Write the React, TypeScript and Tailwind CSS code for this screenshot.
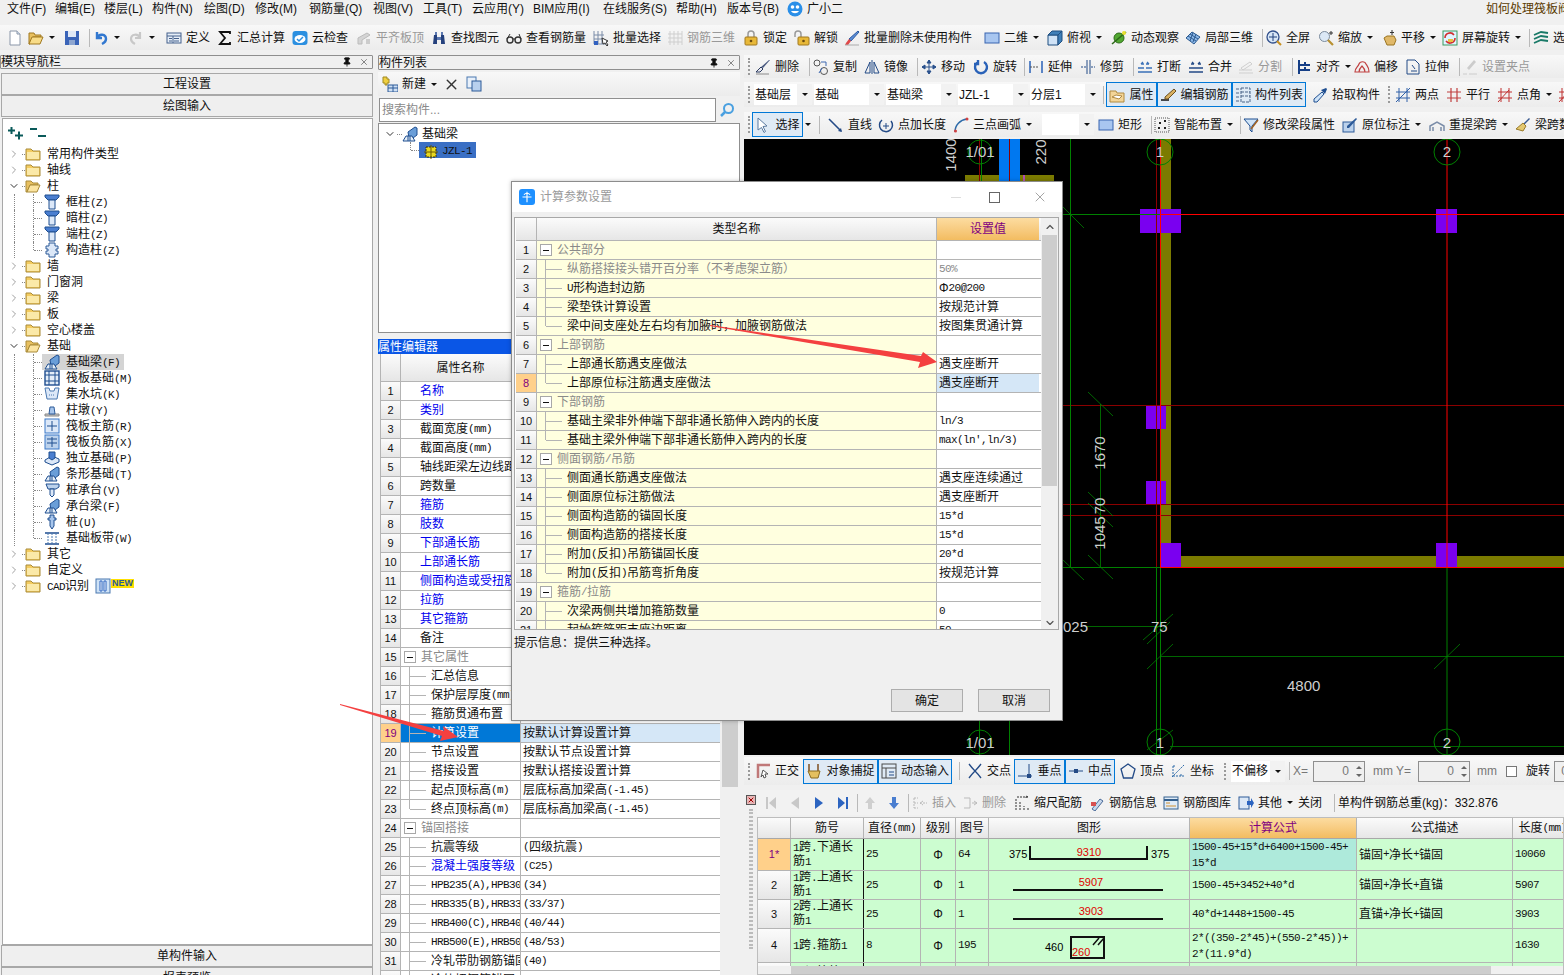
import { ReactNode } from "react";
import { ChevronDown, ChevronRight, ChevronUp, Pin, X } from "lucide-react";

// Small toolbar drawings, all in a 16x16 box
const ICONS: Record<string, ReactNode> = {
  doc: <><path d="M3 1h7l3 3v11H3z" fill="#fff" stroke="#8a96a8" /><path d="M10 1v3h3" fill="#d8e4f4" stroke="#8a96a8" /></>,
  open: <><path d="M1 3h5l1 2h6v2H5L2 14H1z" fill="#e8c060" stroke="#a07820" /><path d="M4 7h11l-3 7H1z" fill="#f8dc88" stroke="#a07820" /></>,
  save: <><path d="M1 1h14v14H1z" fill="#3a64b8" /><path d="M4 1h8v6H4z" fill="#dfe8f6" /><path d="M5 10h6v5H5z" fill="#8ea6d0" /></>,
  undo: <path d="M4 2v6h5M4 8c2-5 9-4 9 1 0 3-2 4-4 5" fill="none" stroke="#3278d0" strokeWidth="2.4" />,
  redo: <path d="M12 2v6H7M12 8C10 3 3 4 3 9c0 3 2 4 4 5" fill="none" stroke="#c8c8c8" strokeWidth="2.2" />,
  define: <><rect x="1" y="3" width="14" height="10" fill="#e6eef8" stroke="#44608c" /><path d="M1 6h14M3 8.5h3M3 11h3M8 8.5h5M8 11h5M7 6v7" stroke="#44608c" fill="none" /></>,
  sigma: <path d="M13 4V2H3l5 6-5 6h10v-2" fill="none" stroke="#111" strokeWidth="1.8" />,
  cloud: <><rect x="0.5" y="1" width="15" height="14" rx="3" fill="#2b8fe0" /><ellipse cx="8" cy="9" rx="5.5" ry="4" fill="#fff" /><path d="M5 9l2 2 4-4" fill="none" stroke="#2b8fe0" strokeWidth="1.5" /></>,
  flat: <><path d="M2 14V8l9-5 3 2-8 5v4z" fill="#d4d4d4" stroke="#bbb" /><path d="M10 14h4V9h-4z" fill="#ccc" /></>,
  bino: <><path d="M2 14l1-9h3v9zM10 14V5h3l1 9z" fill="#24407c" /><path d="M6 7h4v3H6zM4 2h2v3H4zM10 2h2v3h-2z" fill="#5c78b0" /></>,
  glasses: <><circle cx="4" cy="10" r="3" fill="none" stroke="#333" strokeWidth="1.4" /><circle cx="12" cy="10" r="3" fill="none" stroke="#333" strokeWidth="1.4" /><path d="M7 9h2M1 9l3-5M15 9l-2-5" stroke="#333" fill="none" /></>,
  batch: <><path d="M1 1v13h12M1 5h10M1 9h10M5 1v13M9 1v13" stroke="#7a8ca8" fill="none" /><path d="M9 8l6 3-2 1 2 3-1 1-2-3-2 1z" fill="#fff" stroke="#333" /><rect x="1" y="11" width="4" height="4" fill="#3060c0" /></>,
  r3d: <path d="M3 1v14M7 1v14M11 1v14M15 1v14M1 4h14M1 8h14M1 12h14" stroke="#cfcfcf" fill="none" />,
  lock: <><path d="M5 8V4a3 3 0 0 1 6 0v4" fill="none" stroke="#9a9a9a" strokeWidth="1.5" /><rect x="2" y="7" width="12" height="8" rx="1" fill="#e8b838" stroke="#a07820" /><circle cx="8" cy="11" r="1.3" fill="#6a4a10" /></>,
  unlock: <><path d="M1 7V4a3 3 0 0 1 6 0v3" fill="none" stroke="#9a9a9a" strokeWidth="1.5" /><rect x="4" y="7" width="11" height="8" rx="1" fill="#e8b838" stroke="#a07820" /><circle cx="9.5" cy="11" r="1.3" fill="#6a4a10" /></>,
  brush: <><path d="M14 1l1 1-8 9-2-2z" fill="#5b8ed8" stroke="#2c5aa0" /><path d="M5 9l2 2-3 4-3 0 1-2z" fill="#e04848" /><path d="M1 15h14" stroke="#aaa" /></>,
  rect: <rect x="1" y="3" width="14" height="10" fill="#a8c6f0" stroke="#3864b0" />,
  cube: <><path d="M1 5h10v10H1z" fill="#cfe2f6" stroke="#1f4e80" /><path d="M1 5l4-4h10l-4 4zM11 5l4-4v10l-4 4z" fill="#3f7fb8" stroke="#1f4e80" /></>,
  orbit: <><circle cx="8" cy="8" r="5" fill="#52a832" stroke="#2c6a18" /><path d="M1 14L15 2" stroke="#2c6a18" strokeWidth="1.6" /><circle cx="13" cy="3" r="2" fill="#e8e030" /></>,
  local3d: <path d="M1 8l6-6 8 5-6 7zM5 4l8 5M3 6l8 5M8 2.500L5 11M11 4l-3 8" fill="#8cb8e8" stroke="#2c5a90" />,
  full: <><circle cx="7" cy="7" r="6" fill="#d8e6f6" stroke="#32508c" strokeWidth="1.3" /><path d="M7 3v8M3 7h8" stroke="#20407c" /><path d="M11 11l4 4" stroke="#c89020" strokeWidth="2" /></>,
  zoom: <><circle cx="6.500" cy="6.500" r="5" fill="#dbe8f6" stroke="#7a8a9c" /><path d="M10 10l5 5" stroke="#b89030" strokeWidth="2.2" /><path d="M13 1v4M11 3h4" stroke="#333" /></>,
  hand: <><path d="M3 8l3-2 7 0 2 4-2 5H6z" fill="#e0b868" stroke="#9a7420" /><path d="M11 0v5M9 2.500h4" stroke="#333" /></>,
  spin: <><rect x="1" y="1" width="14" height="14" fill="#dff4ff" stroke="#3a9a60" /><path d="M3 8a5 5 0 0 1 9-3M13 8a5 5 0 0 1-9 3" fill="none" stroke="#d03030" strokeWidth="1.6" /><path d="M6 9h5v3H6z" fill="#e8c040" /></>,
  layers: <path d="M1 5l7-3 7 1M1 9l7-3 7 1M1 13l7-3 7 1" fill="none" stroke="#1a7a68" strokeWidth="1.8" />,
  erase: <><path d="M15 1L8 9l-2-1 8-7z" fill="#4a5a80" /><path d="M6 8l2 2-3 3H1z" fill="#e8e8f0" stroke="#2c3c60" /><path d="M1 15h13" stroke="#8a8a8a" /></>,
  copyc: <><circle cx="4" cy="4" r="3" fill="none" stroke="#555" /><circle cx="11" cy="12" r="3.500" fill="none" stroke="#555" /><path d="M8 3l5 0v4M6 14l3-5" stroke="#3a66b0" fill="none" /></>,
  mirror: <path d="M8 1v14M6 3L1 14h5zM10 3l5 11h-5z" fill="none" stroke="#234a86" />,
  move: <path d="M8 1v14M1 8h14M8 1L6 4h4zM8 15l-2-3h4zM1 8l3-2v4zM15 8l-3-2v4z" fill="#28508c" stroke="#28508c" />,
  rot: <path d="M5 3a6 6 0 1 0 6 0M5 1v4H1" fill="none" stroke="#2a62b8" strokeWidth="2.400" />,
  ext: <><path d="M2 2v12M14 2v12" stroke="#2a62b8" strokeWidth="1.500" /><path d="M2 8h9" stroke="#555" strokeDasharray="2 1" /></>,
  trim: <><path d="M7 1v14M10 1v14" stroke="#234a86" /><path d="M1 8h6M11 8h4" stroke="#234a86" strokeDasharray="2 1" /></>,
  brk: <path d="M1 9h6M9 9h6M1 13h14M4 5h3M9 5h3M4 5l2-2M12 5l-2-2" stroke="#3a70b8" fill="none" strokeWidth="1.300" />,
  merge: <path d="M1 9h14M1 13h14M3 5h3M10 5h3M6 5L4 3M10 5l2-2" stroke="#234a86" fill="none" strokeWidth="1.300" />,
  split: <path d="M1 14h14M3 9l9-6 2 2-9 6zM1 11h13" stroke="#cfcfcf" fill="none" />,
  align: <path d="M3 1v14M3 6h11M3 11h11M9 3v3M9 8v3" stroke="#153e86" fill="none" strokeWidth="2" />,
  offset: <path d="M1 13c0-4 3-5 4-8 1-3 6-3 7 0 1 2 3 3 3 8zM5 13c0-3 1-4 3-6 2 2 3 3 3 6z" fill="none" stroke="#c04040" strokeWidth="1.200" />,
  stretch: <path d="M2 1h8l4 4v10H2zM7 6l3 4M6 12h6" fill="none" stroke="#234a86" />,
  grip: <><path d="M12 1l2 2-7 8-2-2z" fill="#ccc" /><path d="M1 15h4M7 15h8" stroke="#ccc" /></>,
  attr: <><path d="M1 4h6l1 2h7v9H1z" fill="#f3d598" stroke="#b08a40" /><path d="M3 10l4-2 6 1-3 3z" fill="#fff" stroke="#b08a40" /></>,
  editbar: <><path d="M1 13h8" stroke="#111" strokeWidth="1.500" /><path d="M14 2l2 2-8 8-3 0 0-2z" fill="#d8b060" stroke="#6a5020" /></>,
  list: <path d="M1 2h3M1 6h3M1 10h3M1 14h3M6 1h9v14H6zM6 5h9M6 9h9" fill="none" stroke="#4a6488" strokeDasharray="3 1" />,
  pick: <><path d="M10 5l2 2-7 8H2l0-3z" fill="#cfe4f8" stroke="#1f4e90" /><path d="M9 3l5-2 1 1-2 5z" fill="#1f4e90" /></>,
  twop: <path d="M4 1v14M12 1v14M1 5h14M1 11h14M1 15L15 1" stroke="#3060a8" fill="none" />,
  para: <path d="M5 1v14M11 1v14M1 5h14M1 11h14" stroke="#c04040" fill="none" strokeWidth="1.200" />,
  angle: <path d="M4 1v14M12 1v14M1 5h14M1 11h14M1 15L12 3" stroke="#c03030" fill="none" />,
  cursor: <path d="M3 1l9 8-4 .5 2.500 5-1.500 1-2.500-5L3 13z" fill="#fff" stroke="#5a7aa0" />,
  line: <><path d="M1 2l12 12" stroke="#234a86" strokeWidth="1.600" /><path d="M14 15l-4-1 3-3z" fill="#234a86" /></>,
  addlen: <><path d="M4 3a6.500 6.500 0 1 0 9 1" fill="none" stroke="#234a86" strokeWidth="1.500" /><path d="M8 6v6M5 9h6" stroke="#234a86" /></>,
  arc: <><path d="M2 15C2 8 7 3 14 2" fill="none" stroke="#2c6aa8" strokeWidth="1.500" /><circle cx="2.500" cy="14" r="1.500" fill="#d04040" /><circle cx="14" cy="2" r="1.500" fill="#d04040" /></>,
  smart: <><rect x="1" y="1" width="14" height="14" fill="none" stroke="#555" strokeDasharray="1 1" /><path d="M5 5h2v2H5zM10 3h2v2h-2zM4 10h2v2H4zM10 10h2v2h-2z" fill="#222" /></>,
  funnel: <><path d="M1 2h14L9 9v6L7 13V9z" fill="#cfe4f8" stroke="#1f4e90" /><path d="M15 3l-7 9" stroke="#a06020" strokeWidth="1.500" /></>,
  mark: <><rect x="1" y="5" width="11" height="10" fill="#bcd2ec" stroke="#2c5a98" /><path d="M14 1l1 1-8 9-2 0 0-2z" fill="#2c5a98" /></>,
  span: <path d="M1 14V9l7-4 7 4v5M4 14v-4M12 14v-4" fill="none" stroke="#7a8ca8" strokeWidth="1.500" />,
  broom: <><path d="M14 1l1 1-6 6-1-1z" fill="#3a5a90" /><path d="M8 6l3 3-3 5-7-2z" fill="#e4c870" stroke="#9a7a28" /></>,
  ortho: <><path d="M3 15V2h12" fill="none" stroke="#c07878" strokeWidth="2.500" /><path d="M8 7l5 4-3 0 1 3-2 1-1-3-2 2z" fill="#fff" stroke="#555" /></>,
  snap: <><path d="M3 1v7M12 1v7" stroke="#805020" strokeWidth="1.500" /><path d="M2 8h12l-2 7H5z" fill="#e4c060" stroke="#8a6a20" /></>,
  dyn: <><rect x="1" y="1" width="14" height="14" fill="none" stroke="#4a4a4a" /><path d="M1 5h14M5 5v10" stroke="#4a4a4a" /><path d="M8 9h5M8 12h5" stroke="#234a86" /></>,
  cross: <path d="M2 1c3 4 4 5 6 7 2-2 3-3 6-7M2 15c3-4 4-5 6-7 2 2 3 3 6 7" fill="none" stroke="#234a86" strokeWidth="1.300" />,
  perp: <><path d="M12 1v12M1 13h14" stroke="#234a86" /><rect x="10" y="11" width="4" height="4" fill="#234a86" /></>,
  mid: <><path d="M1 8h14" stroke="#234a86" /><rect x="6" y="6" width="4" height="4" fill="#234a86" /></>,
  vertex: <path d="M8 1l7 5-2.500 9h-9L1 6z" fill="none" stroke="#234a86" strokeWidth="1.300" />,
  coord: <path d="M2 14l12-12M3 3v10M3 13h11M3 3h2M11 13v-2" fill="none" stroke="#2c6aa8" strokeDasharray="2 1" />,
  first: <path d="M5 2v12H3V2zM13 2v12L6 8z" fill="#c8c8c8" />,
  prev: <path d="M12 2v12L4 8z" fill="#c8c8c8" />,
  next: <path d="M4 2v12l8-6z" fill="#2c64c0" />,
  last: <path d="M3 2v12l7-6zM11 2h2v12h-2z" fill="#2c64c0" />,
  up: <path d="M8 2l5 6h-3v6H6V8H3z" fill="#cfcfcf" />,
  down: <path d="M8 14l5-6h-3V2H6v6H3z" fill="#4a7ed0" />,
  ins: <path d="M2 3h4M2 8h4M2 13h4M2 3v10M8 8h7M11 6l-3 2 3 2" fill="none" stroke="#b8b8b8" strokeDasharray="2 1" />,
  del: <path d="M2 3h6v10H2M10 8h5M12 6l3 2-3 2" fill="none" stroke="#bbb" />,
  scale: <path d="M2 15V3M6 15V7M10 15v-4M14 15v-2M3 2h11M14 2l-2-1v2" fill="none" stroke="#333" strokeDasharray="2 1" />,
  info: <><path d="M3 14l8-10 3 2-8 10z" fill="#c8d8ec" stroke="#4a6a98" /><path d="M2 7h5v4H2z" fill="#d85050" /></>,
  gallery: <><rect x="1" y="2" width="14" height="12" fill="#e0ecf8" stroke="#34608e" /><path d="M1 5h14" stroke="#34608e" strokeWidth="2" /><path d="M3 8h4M3 11h10" stroke="#d09030" /></>,
  other: <><rect x="1" y="2" width="10" height="12" fill="#dce8f6" stroke="#2c5a98" /><path d="M9 6h4V3l3 5-3 5v-3H9z" fill="#2c64c0" /></>,
  newp: <><path d="M1 1h4v2h2v4H5v2H3V7H1z" fill="#f0d040" stroke="#a08820" /><rect x="6" y="9" width="10" height="7" fill="#cfe0f4" stroke="#2c5a98" /><path d="M6 12h10M11 9v7" stroke="#2c5a98" /></>,
  copy: <><rect x="1" y="1" width="9" height="11" fill="#e8f0fa" stroke="#4a78b0" /><rect x="6" y="5" width="9" height="10" fill="#b8d0ee" stroke="#2c5a98" /></>,
  search: <><circle cx="9.500" cy="6.500" r="4.500" fill="none" stroke="#4aa0e0" strokeWidth="2" /><path d="M6 10l-4 4" stroke="#4aa0e0" strokeWidth="2.500" /></>,
  folder: <><path d="M1 3h5l2 2h7v9H1z" fill="#f4cc60" stroke="#a88a38" /><path d="M2 6h12v7H2z" fill="#fbe9a8" /></>,
  folderOpen: <><path d="M1 3h5l2 2h5v2H5l-3 7H1z" fill="#e8c060" stroke="#a88a38" /><path d="M5 7h10l-3 7H2z" fill="#fbe4a0" stroke="#a88a38" /></>,
  col: <><path d="M1 1h14v2l-3 3H4L1 3z" fill="#4a7ed0" stroke="#1f4e90" /><path d="M5 6h6v9H5z" fill="#dce8f8" stroke="#1f4e90" /></>,
  gzz: <path d="M5 1h6v3h3v3h-2v2h2v3h-3v3H5v-3H2V9h2V7H2V4h3z" fill="#dce8f8" stroke="#2c5a98" />,
  beam: <><path d="M6 6l7-5 2 1v7l-4 3H7z" fill="#6a9ed8" stroke="#1f4e90" /><path d="M1 15l3-5h6l3 5zM6 10v5M8 10v5" fill="#e4eef8" stroke="#1f4e90" /></>,
  raft: <><rect x="1" y="1" width="14" height="14" fill="#e4eef8" stroke="#1f4e90" strokeWidth="1.400" /><path d="M5 1v14M11 1v14M1 5h14M1 11h14" stroke="#1f4e90" /></>,
  pit: <><path d="M1 2h4l1 3h4l1-3h4l-2 11H3z" fill="#dce8f8" stroke="#4a78b0" /><path d="M5 9h6" stroke="#4a78b0" strokeDasharray="1 1" /></>,
  pier: <><path d="M1 12h14v2H1z" fill="#c8c8c8" stroke="#888" /><path d="M6 5h4l1 7H5z" fill="#a8c6ec" stroke="#2c5a98" /></>,
  raftm: <><rect x="1" y="1" width="14" height="14" fill="#dce8f8" stroke="#3a78c8" /><path d="M8 3v10M3 8h10" stroke="#1f4e90" /></>,
  raftn: <><rect x="1" y="1" width="14" height="14" fill="#bcd2ec" stroke="#3a78c8" /><path d="M3 5h10M8 3v10M3 9h10" stroke="#1f4e90" /></>,
  indep: <><path d="M1 10l7-4 7 3v3l-7 3-7-3z" fill="#dce8f8" stroke="#1f4e90" /><path d="M5 2h6v6l-3 2-3-2z" fill="#4a7ed0" stroke="#1f4e90" /></>,
  cap: <><path d="M2 2h13v3l-3 2H4z" fill="#bcd2ec" stroke="#1f4e90" /><path d="M6 7h4v6l-2 2-2-2z" fill="#dce8f8" stroke="#1f4e90" /></>,
  pile: <><path d="M6 1h4v3h2v2h-2v6l-2 3-2-3V6H4V4h2z" fill="#a8c6ec" stroke="#1f4e90" /></>,
  band: <><path d="M1 3h14M1 14h14" stroke="#1f4e90" strokeWidth="1.500" /><path d="M4 3v11M8 3v11M12 3v11" stroke="#4a78b0" strokeDasharray="2 1" /></>,
  cad: <><rect x="1" y="1" width="14" height="14" fill="#cfe2f6" stroke="#4a78b0" /><path d="M5 3h2v10H5zM9 3h2v10H9z" fill="#fff" stroke="#2c64c0" /></>,
  star: <><rect x="3" y="3" width="10" height="10" fill="#e8d820" stroke="#3a3000" strokeDasharray="2 1" /><path d="M8 1v14M1 8h14" stroke="#6a5a00" /></>,
};

function Icon({ n }: { n: string }) {
  return (
    <svg viewBox="0 0 16 16" className="h-4 w-4 shrink-0">
      {ICONS[n]}
    </svg>
  );
}

function Caret({ className = "ml-[5px]" }: { className?: string }) {
  return <span className={`h-0 w-0 shrink-0 border-x-[3px] border-t-[3px] border-x-transparent border-t-[#111] ${className}`} />;
}

function Tool(props: { n?: string; label?: string; w: string; dim?: boolean; caret?: boolean }) {
  return (
    <div className={`flex h-full shrink-0 items-center whitespace-nowrap ${props.w} ${props.dim ? "text-[#999]" : ""}`}>
      {props.n && <Icon n={props.n} />}
      {props.label && <span className="ml-[4px]">{props.label}</span>}
      {props.caret && <Caret />}
    </div>
  );
}

// A pressed toggle in a toolbar: blue frame, pale fill
function Toggle(props: { n: string; label: string; w: string }) {
  return (
    <div className={`flex h-[25px] shrink-0 items-center justify-center whitespace-nowrap border border-[#0078d7] bg-[#dfeaf5] ${props.w}`}>
      <Icon n={props.n} />
      <span className="ml-[4px]">{props.label}</span>
    </div>
  );
}

function Sep({ w }: { w: string }) {
  return (
    <div className={`flex h-full shrink-0 items-center justify-center ${w}`}>
      <span className="h-[18px] w-px bg-[#b9b9b9]" />
    </div>
  );
}

function Grip({ w }: { w: string }) {
  return (
    <div className={`flex h-full shrink-0 items-center ${w}`}>
      <span className="h-[17px] w-[2px] border-l-2 border-dotted border-[#9a9a9a]" />
    </div>
  );
}

function Combo({ label, w }: { label: string; w: string }) {
  return (
    <div className={`flex h-[21px] shrink-0 items-center bg-white pl-[1px] ${w}`}>
      <span className="flex-1 whitespace-nowrap">{label}</span>
      <div className="flex h-full w-[15px] items-center justify-center bg-[#f2f2f2]">
        <Caret className="" />
      </div>
    </div>
  );
}

function PanelTitle({ title }: { title: string }) {
  return (
    <div className="flex h-[15px] items-center rounded-[1px] border border-[#8f8f8f] bg-[#f0f0f0] leading-none">
      <span className="flex-1">{title}</span>
      <Pin size={10} className="mr-[7px]" color="#111" fill="#111" />
      <X size={10} className="mr-[3px]" color="#444" strokeWidth={1.500} />
    </div>
  );
}

function NavButton({ label }: { label: string }) {
  return (
    <div className="flex h-[22px] shrink-0 items-center justify-center border border-[#a8a8a8] bg-[#efefef]">
      {label}
    </div>
  );
}

// Latin runs in the grids are narrow and fixed-width, as in the app's own font
function Mixed({ s }: { s: string }) {
  return (
    <>
      {s.split(/([\x21-\x7e]+)/).map((part, i) =>
        /^[\x21-\x7e]+$/.test(part) ? (
          <span key={i} className="font-['Liberation_Mono',monospace] text-[11px] tracking-[-0.6px]">{part}</span>
        ) : (
          part
        ),
      )}
    </>
  );
}

const NAV_TREE: { label: string; n: string; child?: boolean; last?: boolean; open?: boolean; sel?: boolean }[] = [
  { label: "常用构件类型", n: "folder" },
  { label: "轴线", n: "folder" },
  { label: "柱", n: "folderOpen", open: true },
  { label: "框柱(Z)", n: "col", child: true },
  { label: "暗柱(Z)", n: "col", child: true },
  { label: "端柱(Z)", n: "col", child: true },
  { label: "构造柱(Z)", n: "gzz", child: true, last: true },
  { label: "墙", n: "folder" },
  { label: "门窗洞", n: "folder" },
  { label: "梁", n: "folder" },
  { label: "板", n: "folder" },
  { label: "空心楼盖", n: "folder" },
  { label: "基础", n: "folderOpen", open: true },
  { label: "基础梁(F)", n: "beam", child: true, sel: true },
  { label: "筏板基础(M)", n: "raft", child: true },
  { label: "集水坑(K)", n: "pit", child: true },
  { label: "柱墩(Y)", n: "pier", child: true },
  { label: "筏板主筋(R)", n: "raftm", child: true },
  { label: "筏板负筋(X)", n: "raftn", child: true },
  { label: "独立基础(P)", n: "indep", child: true },
  { label: "条形基础(T)", n: "beam", child: true },
  { label: "桩承台(V)", n: "cap", child: true },
  { label: "承台梁(F)", n: "beam", child: true },
  { label: "桩(U)", n: "pile", child: true },
  { label: "基础板带(W)", n: "band", child: true, last: true },
  { label: "其它", n: "folder" },
  { label: "自定义", n: "folder" },
  { label: "CAD识别", n: "folder" },
];

function NavRow({ row }: { row: (typeof NAV_TREE)[number] }) {
  if (row.child) {
    return (
      <div className="flex h-[16px] items-center">
        <span className="ml-[11px] h-full border-l border-dotted border-[#888]" />
        <span className={`ml-[18px] border-l border-dotted border-[#888] ${row.last ? "h-1/2 self-start" : "h-full"}`} />
        <span className="w-[8px] border-t border-dotted border-[#888]" />
        <div className={`flex h-full items-center pl-[2px] pr-[4px] ${row.sel ? "bg-[#d4d4d4]" : ""}`}>
          <Icon n={row.n} />
          <span className="ml-[6px] whitespace-nowrap"><Mixed s={row.label} /></span>
        </div>
      </div>
    );
  }
  return (
    <div className="flex h-[16px] items-center">
      {row.open ? (
        <ChevronDown size={12} className="ml-[5px]" color="#333" strokeWidth={2} />
      ) : (
        <ChevronRight size={12} className="ml-[5px]" color="#a0a0a0" strokeWidth={2} />
      )}
      <span className="ml-[2px] w-[3px] border-t border-dotted border-[#888]" />
      <Icon n={row.n} />
      <span className="ml-[6px] whitespace-nowrap"><Mixed s={row.label} /></span>
      {row.label.startsWith("CAD") && (
        <>
          <span className="ml-[6px]"><Icon n="cad" /></span>
          <span className="mb-[5px] bg-[#ffe000] px-px text-[9px] font-bold leading-[9px] text-[#2c5a98]">NEW</span>
        </>
      )}
    </div>
  );
}

type Kind = "group" | "blue" | "dim" | undefined;

function TreeLead({ last }: { last?: boolean }) {
  return (
    <>
      <span className={`ml-[8px] w-px shrink-0 bg-[#b4b4b4] ${last ? "h-1/2 self-start" : "h-full"}`} />
      <span className="mr-[5px] h-px w-[16px] shrink-0 bg-[#b4b4b4]" />
    </>
  );
}

function GroupBox() {
  return (
    <span className="ml-[3px] mr-[5px] flex h-[12px] w-[12px] shrink-0 items-center justify-center border border-[#a8a8a8] bg-white">
      <span className="h-px w-[6px] bg-[#111]" />
    </span>
  );
}

const PROPS: { label: string; value?: string; kind?: Kind; tree?: boolean; last?: boolean; sel?: boolean }[] = [
  { label: "名称", kind: "blue" },
  { label: "类别", kind: "blue" },
  { label: "截面宽度(mm)" },
  { label: "截面高度(mm)" },
  { label: "轴线距梁左边线距离" },
  { label: "跨数量" },
  { label: "箍筋", kind: "blue" },
  { label: "肢数", kind: "blue" },
  { label: "下部通长筋", kind: "blue" },
  { label: "上部通长筋", kind: "blue" },
  { label: "侧面构造或受扭筋", kind: "blue" },
  { label: "拉筋", kind: "blue" },
  { label: "其它箍筋", kind: "blue" },
  { label: "备注" },
  { label: "其它属性", kind: "group" },
  { label: "汇总信息", tree: true },
  { label: "保护层厚度(mm)", tree: true },
  { label: "箍筋贯通布置", tree: true },
  { label: "计算设置", value: "按默认计算设置计算", tree: true, sel: true },
  { label: "节点设置", value: "按默认节点设置计算", tree: true },
  { label: "搭接设置", value: "按默认搭接设置计算", tree: true },
  { label: "起点顶标高(m)", value: "层底标高加梁高(-1.45)", tree: true },
  { label: "终点顶标高(m)", value: "层底标高加梁高(-1.45)", tree: true, last: true },
  { label: "锚固搭接", kind: "group" },
  { label: "抗震等级", value: "(四级抗震)", tree: true },
  { label: "混凝土强度等级", value: "(C25)", tree: true, kind: "blue" },
  { label: "HPB235(A),HPB300(A)", value: "(34)", tree: true },
  { label: "HRB335(B),HRB335E", value: "(33/37)", tree: true },
  { label: "HRB400(C),HRB400E", value: "(40/44)", tree: true },
  { label: "HRB500(E),HRB500E", value: "(48/53)", tree: true },
  { label: "冷轧带肋钢筋锚固", value: "(40)", tree: true },
  { label: "冷轧扭钢筋锚固", value: "(35)", tree: true },
];

const SETTINGS: { label: string; value?: string; group?: boolean; dim?: boolean; last?: boolean; sel?: boolean }[] = [
  { label: "公共部分", group: true },
  { label: "纵筋搭接接头错开百分率（不考虑架立筋）", value: "50%", dim: true },
  { label: "U形构造封边筋", value: "Φ20@200" },
  { label: "梁垫铁计算设置", value: "按规范计算" },
  { label: "梁中间支座处左右均有加腋时，加腋钢筋做法", value: "按图集贯通计算", last: true },
  { label: "上部钢筋", group: true },
  { label: "上部通长筋遇支座做法", value: "遇支座断开" },
  { label: "上部原位标注筋遇支座做法", value: "遇支座断开", last: true, sel: true },
  { label: "下部钢筋", group: true },
  { label: "基础主梁非外伸端下部非通长筋伸入跨内的长度", value: "ln/3" },
  { label: "基础主梁外伸端下部非通长筋伸入跨内的长度", value: "max(ln',ln/3)", last: true },
  { label: "侧面钢筋/吊筋", group: true },
  { label: "侧面通长筋遇支座做法", value: "遇支座连续通过" },
  { label: "侧面原位标注筋做法", value: "遇支座断开" },
  { label: "侧面构造筋的锚固长度", value: "15*d" },
  { label: "侧面构造筋的搭接长度", value: "15*d" },
  { label: "附加(反扣)吊筋锚固长度", value: "20*d" },
  { label: "附加(反扣)吊筋弯折角度", value: "按规范计算", last: true },
  { label: "箍筋/拉筋", group: true },
  { label: "次梁两侧共增加箍筋数量", value: "0" },
  { label: "起始箍筋距支座边距离", value: "50" },
];

const HEAD_BG = "bg-linear-to-b from-[#fbfbfb] to-[#e6e6e6]";
const NUM_CELL = "flex shrink-0 items-center justify-center border-r border-[#b4b4b4] text-[11px]";

function SettingsDialog() {
  return (
    <div className="absolute left-[511px] top-[181px] flex h-[540px] w-[552px] flex-col border border-[#8c8c8c] bg-[#f0f0f0] shadow-[0_0_4px_rgba(0,0,0,0.25)]">
      <div className="flex h-[30px] shrink-0 items-center bg-white text-[#9a9a9a]">
        <span className="ml-[7px] flex h-[16px] w-[16px] items-center justify-center rounded-[3px] bg-[#1e90ff]">
          <svg viewBox="0 0 16 16" className="h-3 w-3"><path d="M8 1v14M2 8h12M4 5a5 5 0 0 1 8 0" fill="none" stroke="#fff" strokeWidth="1.500" /></svg>
        </span>
        <span className="ml-[5px] flex-1">计算参数设置</span>
        <span className="mr-[28px] h-px w-[10px] bg-[#ddd]" />
        <span className="mr-[32px] h-[11px] w-[11px] border border-[#666]" />
        <X size={16} className="mr-[14px]" color="#777" strokeWidth={1} />
      </div>
      <div className="ml-[2px] mt-[5px] flex h-[413px] w-[545px] shrink-0 border border-[#a8a8a8] bg-white">
        <div className="flex min-w-0 flex-1 flex-col overflow-hidden pl-[1px]">
          <div className={`flex h-[23px] shrink-0 border-b border-[#b4b4b4] ${HEAD_BG}`}>
            <div className="w-[21px] shrink-0 border-r border-[#b4b4b4]" />
            <div className="flex w-[400px] shrink-0 items-center justify-center border-r border-[#b4b4b4]">类型名称</div>
            <div className="flex w-[102px] shrink-0 items-center justify-center bg-linear-to-b from-[#fcdca0] to-[#f3bc60] text-[#800080]">设置值</div>
          </div>
          {SETTINGS.map((r, i) => (
            <div key={i} className="flex h-[19px] shrink-0 border-b border-[#b4b4b4]">
              <div className={`w-[21px] ${NUM_CELL} ${r.sel ? "bg-[#ffd08a] text-[#800080]" : HEAD_BG}`}>{i + 1}</div>
              <div className={`flex w-[400px] shrink-0 items-center overflow-hidden whitespace-nowrap border-r border-[#b4b4b4] bg-[#ffffdf] ${r.group || r.dim ? "text-[#8a8a8a]" : ""}`}>
                {r.group ? <GroupBox /> : <TreeLead last={r.last} />}
                <Mixed s={r.label} />
              </div>
              <div className={`flex w-[102px] shrink-0 items-center whitespace-nowrap pl-[2px] ${r.sel ? "bg-[#d5e7f7]" : ""} ${r.dim ? "text-[#8a8a8a]" : ""}`}>
                {r.value && <Mixed s={r.value} />}
              </div>
            </div>
          ))}
        </div>
        <div className="flex w-[17px] shrink-0 flex-col items-center bg-[#f0f0f0] pt-[3px]">
          <ChevronUp size={12} color="#555" strokeWidth={2.500} />
          <div className="mt-[2px] h-[253px] w-[15px] bg-[#cdcdcd]" />
          <ChevronDown size={12} className="mt-[131px]" color="#555" strokeWidth={2.500} />
        </div>
      </div>
      <div className="ml-[2px] mt-[4px] h-[55px] shrink-0">提示信息：提供三种选择。</div>
      <div className="ml-[379px] flex gap-[15px]">
        <div className="flex h-[23px] w-[72px] items-center justify-center border border-[#adadad] bg-[#e4e4e4]">确定</div>
        <div className="flex h-[23px] w-[72px] items-center justify-center border border-[#adadad] bg-[#e4e4e4]">取消</div>
      </div>
    </div>
  );
}

function CadCanvas() {
  const GREEN = "#008000";
  const DARK = "#8b0000";
  const RED = "#ff0000";
  const PURPLE = "#7a00f0";
  const OLIVE = "#7b7b00";
  const numClass = "fill-[#cfcfcf] text-[15px] font-['Liberation_Sans',sans-serif]";
  return (
    <svg viewBox="744 139 820 616" className="block h-[616px] w-[820px] shrink-0 bg-black">
      <rect x="965" y="175" width="89" height="10" fill={OLIVE} />
      <rect x="999" y="139" width="21" height="46" fill="#0078f0" />
      <path d="M1009.500 139V185" stroke={DARK} />
      <path d="M979.500 139V185" stroke={DARK} />
      <path d="M981.500 139V185M1009.500 720V755M979.500 720V755" stroke={GREEN} />
      <rect x="1023" y="175" width="2" height="10" fill="#b050b0" />
      <circle cx="980" cy="152" r="12" fill="none" stroke={GREEN} />
      <circle cx="980" cy="742" r="12" fill="none" stroke={GREEN} />
      <text x="980" y="157" textAnchor="middle" className={numClass}>1/01</text>
      <text x="980" y="748" textAnchor="middle" className={numClass}>1/01</text>
      <text transform="translate(956 155) rotate(-90)" textAnchor="middle" className={numClass}>1400</text>
      <text transform="translate(1046 152) rotate(-90)" textAnchor="middle" className={numClass}>220</text>

      <rect x="1160" y="139" width="11" height="428" fill={OLIVE} />
      <rect x="1160" y="556" width="404" height="11" fill={OLIVE} />
      <rect x="1140" y="209" width="41" height="24" fill={PURPLE} />
      <rect x="1436" y="209" width="21" height="24" fill={PURPLE} />
      <rect x="1146" y="406" width="20" height="23" fill={PURPLE} />
      <rect x="1146" y="481" width="20" height="23" fill={PURPLE} />
      <rect x="1161" y="543" width="20" height="24" fill={PURPLE} />
      <rect x="1436" y="543" width="21" height="24" fill={PURPLE} />

      <path d="M1063 405.500H1564M1063 504.500H1564M1063 515.500H1564M1156.500 139V567" stroke={DARK} />
      <path d="M1070.500 139V567M1063 214.500H1160M1063 567.500H1160M1156.500 567V755M1160.500 567V755M1447 567V755" stroke={GREEN} />
      <path d="M1160.500 139V567M1447 139V567M1160 214.500H1564M1160 567.500H1564" stroke={RED} />
      <path d="M1100.500 404V567M1088 392L1113 416M1088 492L1113 516M1088 503L1113 527M1088 555L1113 579M1063 207L1084 228M1063 560L1084 580" stroke={GREEN} strokeWidth="0.800" />
      <path d="M1087 626.500H1160M1143 640L1173 614M1147 644L1170 622M1160 656.500H1564M1147 669L1173 644M1434 669L1460 644M1170 746.500H1564M1147 750L1173 730" stroke={GREEN} strokeWidth="0.800" />

      <circle cx="1160" cy="152" r="13" fill="none" stroke={GREEN} />
      <circle cx="1447" cy="152" r="13" fill="none" stroke={GREEN} />
      <circle cx="1160" cy="742" r="13" fill="none" stroke={GREEN} />
      <circle cx="1447" cy="742" r="13" fill="none" stroke={GREEN} />
      <text x="1160" y="157" textAnchor="middle" className={numClass}>1</text>
      <text x="1447" y="157" textAnchor="middle" className={numClass}>2</text>
      <text x="1160" y="748" textAnchor="middle" className={numClass}>1</text>
      <text x="1447" y="748" textAnchor="middle" className={numClass}>2</text>

      <text transform="translate(1105 453) rotate(-90)" textAnchor="middle" className={numClass}>1670</text>
      <text transform="translate(1105 506) rotate(-90)" textAnchor="middle" className={numClass}>70</text>
      <text transform="translate(1105 533) rotate(-90)" textAnchor="middle" className={numClass}>1045</text>
      <text x="1063" y="632" className={numClass}>025</text>
      <text x="1151" y="632" className={numClass}>75</text>
      <text x="1287" y="691" className={numClass}>4800</text>
    </svg>
  );
}

const BAR_COLS = ["w-[33px]", "w-[73px]", "w-[57px]", "w-[35px]", "w-[33px]", "w-[201px]", "w-[167px]", "w-[156px]", "w-[60px]"];
const BAR_HEAD = ["", "筋号", "直径(mm)", "级别", "图号", "图形", "计算公式", "公式描述", "长度(mm)"];

const BAR_ROWS: { h: string; no: string; name: string; dia: string; fig: string; shape: ReactNode; formula: string; desc: string; len: string }[] = [
  {
    h: "h-[32px]", no: "1*", name: "1跨.下通长筋1", dia: "25", fig: "64", formula: "1500-45+15*d+6400+1500-45+\n15*d", desc: "锚固+净长+锚固", len: "10060",
    shape: (
      <svg viewBox="0 0 201 32" className="h-[32px] w-[201px]">
        <path d="M41 7V20H158V7" fill="none" stroke="#111" strokeWidth="2" />
        <text x="20" y="19" className="text-[11px]">375</text>
        <text x="162" y="19" className="text-[11px]">375</text>
        <text x="100" y="17" textAnchor="middle" className="fill-[#e00000] text-[11px]">9310</text>
      </svg>
    ),
  },
  {
    h: "h-[29px]", no: "2", name: "1跨.上通长筋1", dia: "25", fig: "1", formula: "1500-45+3452+40*d", desc: "锚固+净长+直锚", len: "5907",
    shape: (
      <svg viewBox="0 0 201 29" className="h-[29px] w-[201px]">
        <path d="M24 19H174" stroke="#111" strokeWidth="2" />
        <text x="102" y="15" textAnchor="middle" className="fill-[#e00000] text-[11px]">5907</text>
      </svg>
    ),
  },
  {
    h: "h-[29px]", no: "3", name: "2跨.上通长筋1", dia: "25", fig: "1", formula: "40*d+1448+1500-45", desc: "直锚+净长+锚固", len: "3903",
    shape: (
      <svg viewBox="0 0 201 29" className="h-[29px] w-[201px]">
        <path d="M24 19H174" stroke="#111" strokeWidth="2" />
        <text x="102" y="15" textAnchor="middle" className="fill-[#e00000] text-[11px]">3903</text>
      </svg>
    ),
  },
  {
    h: "h-[34px]", no: "4", name: "1跨.箍筋1", dia: "8", fig: "195", formula: "2*((350-2*45)+(550-2*45))+\n2*(11.9*d)", desc: "", len: "1630",
    shape: (
      <svg viewBox="0 0 201 34" className="h-[34px] w-[201px]">
        <rect x="82" y="8" width="33" height="21" fill="none" stroke="#111" strokeWidth="2" />
        <path d="M109 16L115 9M104 16L110 9" stroke="#111" strokeWidth="1.500" />
        <text x="56" y="22" className="text-[11px]">460</text>
        <text x="83" y="27" className="fill-[#e00000] text-[11px]">260</text>
      </svg>
    ),
  },
  {
    h: "h-[20px]", no: "5", name: "1跨.箍筋2", dia: "8", fig: "195", formula: "2*(((350-2*45-2*1.25)/2*1+", desc: "", len: "",
    shape: null,
  },
];

function RebarGrid() {
  return (
    <div className="relative h-[158px] flex-1 overflow-hidden border border-[#bdbdbd] bg-white">
      <div className={`flex h-[21px] border-b border-[#a8a8a8] ${HEAD_BG}`}>
        {BAR_HEAD.map((h, i) => (
          <div
            key={i}
            className={`flex shrink-0 items-center justify-center whitespace-nowrap border-r border-[#b4b4b4] ${BAR_COLS[i]} ${
              i === 6 ? "bg-linear-to-b from-[#fcdca0] to-[#f3bc60] text-[#800080]" : ""
            }`}
          >
            <Mixed s={h} />
          </div>
        ))}
      </div>
      {BAR_ROWS.map((r, i) => (
        <div key={i} className={`flex border-b border-[#b4b4b4] bg-[#ccfdd0] ${r.h}`}>
          <div className={`${BAR_COLS[0]} ${NUM_CELL} ${i === 0 ? "bg-[#ffd08a] text-[#800080]" : HEAD_BG}`}>{r.no}</div>
          <div className={`${BAR_COLS[1]} flex shrink-0 items-center border-r border-[#111] pl-[2px] leading-[13px]`}>
            <span><Mixed s={r.name} /></span>
          </div>
          <div className={`${BAR_COLS[2]} flex shrink-0 items-center border-r border-[#b4b4b4] pl-[2px]`}><Mixed s={r.dia} /></div>
          <div className={`${BAR_COLS[3]} flex shrink-0 items-center justify-center border-r border-[#b4b4b4]`}>Φ</div>
          <div className={`${BAR_COLS[4]} flex shrink-0 items-center border-r border-[#b4b4b4] pl-[2px]`}><Mixed s={r.fig} /></div>
          <div className={`${BAR_COLS[5]} shrink-0 border-r border-[#b4b4b4]`}>{r.shape}</div>
          <div className={`${BAR_COLS[6]} flex shrink-0 items-center border-r border-[#b4b4b4] pl-[2px] leading-[15px] ${i === 0 ? "bg-[#aeeadb]" : ""}`}>
            <span className="whitespace-pre-line"><Mixed s={r.formula} /></span>
          </div>
          <div className={`${BAR_COLS[7]} flex shrink-0 items-center border-r border-[#b4b4b4] pl-[2px]`}><Mixed s={r.desc} /></div>
          <div className={`${BAR_COLS[8]} flex shrink-0 items-center pl-[2px]`}><Mixed s={r.len} /></div>
        </div>
      ))}
      <div className="absolute bottom-0 left-0 right-0 h-[8px] bg-[#f0f0f0]">
        <div className="ml-[33px] h-full w-[700px] bg-[#cdcdcd]" />
      </div>
    </div>
  );
}

function Spin({ w }: { w: string }) {
  return (
    <div className={`flex h-[21px] shrink-0 items-center border border-[#8f8f8f] bg-[#f0f0f0] text-[#777] ${w}`}>
      <span className="flex-1 pr-[4px] text-right">0</span>
      <div className="flex w-[11px] flex-col items-center gap-[5px]">
        <span className="h-0 w-0 border-x-[3px] border-b-[3px] border-x-transparent border-b-[#666]" />
        <Caret className="border-t-[#666]" />
      </div>
    </div>
  );
}

export default function App() {
  return (
    <div className="relative flex h-[975px] w-[1564px] flex-col overflow-hidden bg-[#f0f0f0] font-['Liberation_Sans','Noto_Sans_CJK_SC',sans-serif] text-[12px] text-[#111]">
      {/* Menu */}
      <div className="flex h-[18px] shrink-0 items-center whitespace-nowrap pl-[7px]">
        <span className="w-[48px]">文件(F)</span>
        <span className="w-[49px]">编辑(E)</span>
        <span className="w-[48px]">楼层(L)</span>
        <span className="w-[52px]">构件(N)</span>
        <span className="w-[51px]">绘图(D)</span>
        <span className="w-[54px]">修改(M)</span>
        <span className="w-[64px]">钢筋量(Q)</span>
        <span className="w-[50px]">视图(V)</span>
        <span className="w-[49px]">工具(T)</span>
        <span className="w-[61px]">云应用(Y)</span>
        <span className="w-[70px]">BIM应用(I)</span>
        <span className="w-[73px]">在线服务(S)</span>
        <span className="w-[51px]">帮助(H)</span>
        <span className="w-[60px]">版本号(B)</span>
        <svg viewBox="0 0 16 16" className="mr-[4px] h-4 w-4">
          <circle cx="8" cy="8" r="7.500" fill="#2a8fe8" />
          <circle cx="5.500" cy="6" r="1.800" fill="#fff" />
          <circle cx="10.500" cy="6" r="1.800" fill="#fff" />
          <path d="M4 10c2 3 6 3 8 0z" fill="#fff" />
        </svg>
        <span>广小二</span>
        <span className="ml-auto w-[78px] overflow-hidden text-[#5a3a00]">如何处理筏板阀</span>
      </div>

      {/* Main toolbar */}
      <div className="mt-[7px] flex h-[25px] shrink-0 items-center overflow-hidden bg-linear-to-b from-[#f8f8f8] to-[#ececec] pl-[7px]">
        <Tool n="doc" w="w-[21px]" />
        <Tool n="open" w="w-[36px]" caret />
        <Tool n="save" w="w-[21px]" />
        <Sep w="w-[8px]" />
        <Tool n="undo" w="w-[35px]" caret />
        <Tool n="redo" w="w-[38px]" caret />
        <Tool n="define" label="定义" w="w-[51px]" />
        <Tool n="sigma" label="汇总计算" w="w-[75px]" />
        <Tool n="cloud" label="云检查" w="w-[64px]" />
        <Tool n="flat" label="平齐板顶" w="w-[75px]" dim />
        <Tool n="bino" label="查找图元" w="w-[75px]" />
        <Tool n="glasses" label="查看钢筋量" w="w-[87px]" />
        <Tool n="batch" label="批量选择" w="w-[74px]" />
        <Tool n="r3d" label="钢筋三维" w="w-[76px]" dim />
        <Tool n="lock" label="锁定" w="w-[51px]" />
        <Tool n="unlock" label="解锁" w="w-[50px]" />
        <Tool n="brush" label="批量删除未使用构件" w="w-[140px]" />
        <Tool n="rect" label="二维" w="w-[63px]" caret />
        <Tool n="cube" label="俯视" w="w-[64px]" caret />
        <Tool n="orbit" label="动态观察" w="w-[74px]" />
        <Tool n="local3d" label="局部三维" w="w-[74px]" />
        <Sep w="w-[7px]" />
        <Tool n="full" label="全屏" w="w-[52px]" />
        <Tool n="zoom" label="缩放" w="w-[63px]" caret />
        <Tool n="hand" label="平移" w="w-[61px]" caret />
        <Tool n="spin" label="屏幕旋转" w="w-[83px]" caret />
        <Sep w="w-[8px]" />
        <Tool n="layers" label="选择" w="w-[60px]" />
      </div>

      <div className="mt-[5px] flex min-h-0 flex-1">
        {/* Module nav */}
        <div className="flex w-[373px] shrink-0 flex-col">
          <PanelTitle title="模块导航栏" />
          <div className="mt-[4px] flex flex-1 flex-col pl-px">
            <NavButton label="工程设置" />
            <NavButton label="绘图输入" />
            <div className="ml-px mt-px h-[827px] shrink-0 overflow-hidden border border-[#a8a8a8] bg-white">
              <div className="flex h-[27px] items-center pl-[4px]">
                <svg viewBox="0 0 46 16" className="h-4 w-[46px]">
                  <path d="M4.500 2v7M1 5.500h7M12 6.500v8M8 10.500h8" stroke="#0a5a5a" strokeWidth="2" />
                  <path d="M23 4h7M31 11h8" stroke="#0a5a5a" strokeWidth="2" />
                </svg>
              </div>
              {NAV_TREE.map((row) => (
                <NavRow key={row.label} row={row} />
              ))}
            </div>
            <NavButton label="单构件输入" />
            <NavButton label="报表预览" />
          </div>
        </div>

        {/* Component list + property editor */}
        <div className="ml-[5px] flex w-[362px] shrink-0 flex-col">
          <PanelTitle title="构件列表" />
          <div className="mt-[2px] flex h-[24px] shrink-0 items-center bg-linear-to-b from-[#f8f8f8] to-[#ececec] pl-[4px]">
            <Tool n="newp" label="新建" w="w-[61px]" caret />
            <X size={17} className="mr-[6px]" color="#333" strokeWidth={2} />
            <Icon n="copy" />
          </div>
          <div className="ml-px mt-[2px] flex h-[24px] shrink-0">
            <div className="flex w-[337px] items-center border border-[#8f8f8f] bg-white pl-[2px] text-[#8a8a8a]">搜索构件...</div>
            <div className="flex w-[22px] items-center justify-center bg-[#f0f0f0]"><Icon n="search" /></div>
          </div>
          <div className="mt-px h-[210px] shrink-0 border border-[#8f8f8f] bg-white pt-[2px]">
            <div className="flex h-[16px] items-center">
              <ChevronDown size={12} className="ml-[5px]" color="#333" strokeWidth={2} />
              <span className="ml-[1px] w-[5px] border-t border-dotted border-[#888]" />
              <Icon n="beam" />
              <span className="ml-[4px]">基础梁</span>
            </div>
            <div className="flex h-[16px] items-center">
              <span className="ml-[31px] h-1/2 self-start border-l border-dotted border-[#888]" />
              <span className="w-[8px] border-t border-dotted border-[#888]" />
              <div className="flex h-full w-[57px] items-center bg-[#3a6fc4] pl-[4px]">
                <span className="h-3 w-3"><Icon n="star" /></span>
                <span className="ml-[7px]"><Mixed s="JZL-1" /></span>
              </div>
            </div>
          </div>
          <div className="mt-[6px] flex h-[15px] shrink-0 items-center bg-[#0a56e6] leading-none text-white">属性编辑器</div>
          <div className="flex min-h-0 flex-1 pl-[2px]">
            <div className="w-[340px] shrink-0 overflow-hidden border-l border-[#b4b4b4] bg-white">
              <div className={`flex h-[28px] shrink-0 border-b border-[#b4b4b4] ${HEAD_BG}`}>
                <div className="w-[20px] shrink-0 border-r border-[#b4b4b4]" />
                <div className="flex w-[120px] shrink-0 items-center justify-center border-r border-[#b4b4b4]">属性名称</div>
                <div className="flex flex-1 items-center justify-center">属性值</div>
              </div>
              {PROPS.map((p, i) => (
                <div key={i} className="flex h-[19px] border-b border-[#b4b4b4]">
                  <div className={`w-[20px] ${NUM_CELL} ${p.sel ? "bg-[#ffd08a] text-[#800080]" : HEAD_BG}`}>{i + 1}</div>
                  <div
                    className={`flex w-[120px] shrink-0 items-center overflow-hidden whitespace-nowrap border-r border-[#b4b4b4] ${
                      p.sel ? "bg-[#0078d7] text-white" : p.kind === "blue" ? "text-[#0000ee]" : p.kind === "group" ? "text-[#8a8a8a]" : ""
                    }`}
                  >
                    {p.kind === "group" ? <GroupBox /> : p.tree ? <TreeLead last={p.last} /> : <span className="w-[19px] shrink-0" />}
                    <Mixed s={p.label} />
                  </div>
                  <div className={`flex flex-1 items-center whitespace-nowrap pl-[2px] ${p.sel ? "bg-[#d5e7f7]" : ""}`}>
                    {p.value && <Mixed s={p.value} />}
                  </div>
                </div>
              ))}
            </div>
            <div className="ml-[2px] flex w-[16px] shrink-0 flex-col bg-[#f0f0f0]">
              <div className="mt-[360px] h-[73px] bg-[#cdcdcd]" />
            </div>
          </div>
        </div>

        {/* Drawing area */}
        <div className="ml-[4px] flex w-[820px] shrink-0 flex-col overflow-hidden">
          <div className="flex h-[23px] shrink-0 items-center bg-linear-to-b from-[#f8f8f8] to-[#ececec] pl-[4px]">
            <Grip w="w-[7px]" />
            <Tool n="erase" label="删除" w="w-[51px]" />
            <Sep w="w-[7px]" />
            <Tool n="copyc" label="复制" w="w-[51px]" />
            <Tool n="mirror" label="镜像" w="w-[50px]" />
            <Sep w="w-[7px]" />
            <Tool n="move" label="移动" w="w-[52px]" />
            <Tool n="rot" label="旋转" w="w-[48px]" />
            <Sep w="w-[7px]" />
            <Tool n="ext" label="延伸" w="w-[52px]" />
            <Tool n="trim" label="修剪" w="w-[50px]" />
            <Sep w="w-[7px]" />
            <Tool n="brk" label="打断" w="w-[51px]" />
            <Tool n="merge" label="合并" w="w-[50px]" />
            <Tool n="split" label="分割" w="w-[51px]" dim />
            <Sep w="w-[7px]" />
            <Tool n="align" label="对齐" w="w-[58px]" caret />
            <Tool n="offset" label="偏移" w="w-[51px]" />
            <Tool n="stretch" label="拉伸" w="w-[51px]" />
            <Sep w="w-[6px]" />
            <Tool n="grip" label="设置夹点" w="w-[70px]" dim />
          </div>

          <div className="mt-[4px] flex h-[25px] shrink-0 items-center bg-linear-to-b from-[#f8f8f8] to-[#ececec] pl-[4px]">
            <Grip w="w-[6px]" />
            <Combo label="基础层" w="w-[58px]" />
            <span className="w-[2px] shrink-0" />
            <Combo label="基础" w="w-[70px]" />
            <span className="w-[2px] shrink-0" />
            <Combo label="基础梁" w="w-[70px]" />
            <span className="w-[2px] shrink-0" />
            <Combo label="JZL-1" w="w-[70px]" />
            <span className="w-[2px] shrink-0" />
            <Combo label="分层1" w="w-[70px]" />
            <Sep w="w-[6px]" />
            <Toggle n="attr" label="属性" w="w-[51px]" />
            <Toggle n="editbar" label="编辑钢筋" w="w-[75px]" />
            <Toggle n="list" label="构件列表" w="w-[74px]" />
            <span className="w-[6px] shrink-0" />
            <Tool n="pick" label="拾取构件" w="w-[76px]" />
            <Grip w="w-[7px]" />
            <Tool n="twop" label="两点" w="w-[51px]" />
            <Tool n="para" label="平行" w="w-[51px]" />
            <Tool n="angle" label="点角" w="w-[61px]" caret />
            <Icon n="angle" />
          </div>

          <div className="mt-[5px] flex h-[25px] shrink-0 items-center bg-linear-to-b from-[#f8f8f8] to-[#ececec] pl-[4px]">
            <Grip w="w-[4px]" />
            <Toggle n="cursor" label="选择" w="w-[51px]" />
            <Caret className="ml-[2px]" />
            <Sep w="w-[17px]" />
            <Tool n="line" label="直线" w="w-[50px]" />
            <Tool n="addlen" label="点加长度" w="w-[75px]" />
            <Tool n="arc" label="三点画弧" w="w-[89px]" caret />
            <Combo label="" w="w-[52px]" />
            <span className="w-[4px] shrink-0" />
            <Tool n="rect" label="矩形" w="w-[50px]" />
            <Sep w="w-[6px]" />
            <Tool n="smart" label="智能布置" w="w-[83px]" caret />
            <Sep w="w-[6px]" />
            <Tool n="funnel" label="修改梁段属性" w="w-[99px]" />
            <Tool n="mark" label="原位标注" w="w-[87px]" caret />
            <Tool n="span" label="重提梁跨" w="w-[86px]" caret />
            <Tool n="broom" label="梁跨数据" w="w-[60px]" />
          </div>

          <div className="mt-[2px]">
            <CadCanvas />
          </div>

          <div className="mt-[2px] flex h-[28px] shrink-0 items-center bg-linear-to-b from-[#f8f8f8] to-[#ececec] pl-[4px]">
            <Grip w="w-[7px]" />
            <Tool n="ortho" label="正交" w="w-[48px]" />
            <Toggle n="snap" label="对象捕捉" w="w-[75px]" />
            <Toggle n="dyn" label="动态输入" w="w-[74px]" />
            <Sep w="w-[15px]" />
            <Tool n="cross" label="交点" w="w-[47px]" />
            <Toggle n="perp" label="垂点" w="w-[51px]" />
            <Toggle n="mid" label="中点" w="w-[50px]" />
            <span className="w-[5px] shrink-0" />
            <Tool n="vertex" label="顶点" w="w-[50px]" />
            <Tool n="coord" label="坐标" w="w-[54px]" />
            <Grip w="w-[7px]" />
            <Combo label="不偏移" w="w-[54px]" />
            <Sep w="w-[8px]" />
            <span className="w-[20px] shrink-0 text-[#777]">X=</span>
            <Spin w="w-[52px]" />
            <span className="ml-[8px] w-[45px] shrink-0 text-[#777]">mm Y=</span>
            <Spin w="w-[52px]" />
            <span className="ml-[7px] w-[29px] shrink-0 text-[#777]">mm</span>
            <span className="h-[11px] w-[11px] shrink-0 border border-[#777] bg-white" />
            <span className="ml-[9px] w-[28px] shrink-0">旋转</span>
            <Spin w="w-[30px]" />
          </div>

          <div className="mt-[5px] flex min-h-0 flex-1">
            <div className="flex w-[13px] shrink-0 flex-col items-center">
              <span className="mt-[5px] flex h-[10px] w-[10px] items-center justify-center border border-[#555] bg-[#e8b8b8]">
                <X size={8} color="#a00000" strokeWidth={3} />
              </span>
              <span className="mt-[4px] h-[140px] w-[4px] border-x-2 border-dotted border-[#bbb]" />
            </div>
            <div className="flex min-w-0 flex-1 flex-col">
              <div className="flex h-[25px] shrink-0 items-center bg-[#f2f2f2] pl-[6px]">
                <Tool n="first" w="w-[24px]" />
                <Tool n="prev" w="w-[24px]" />
                <Tool n="next" w="w-[24px]" />
                <Tool n="last" w="w-[18px]" />
                <Sep w="w-[9px]" />
                <Tool n="up" w="w-[24px]" />
                <Tool n="down" w="w-[19px]" />
                <Sep w="w-[7px]" />
                <Tool n="ins" label="插入" w="w-[50px]" dim />
                <Tool n="del" label="删除" w="w-[52px]" dim />
                <Tool n="scale" label="缩尺配筋" w="w-[75px]" />
                <Tool n="info" label="钢筋信息" w="w-[74px]" />
                <Tool n="gallery" label="钢筋图库" w="w-[75px]" />
                <Tool n="other" label="其他" w="w-[60px]" caret />
                <span className="w-[33px] shrink-0">关闭</span>
                <Sep w="w-[7px]" />
                <span className="whitespace-nowrap">单构件钢筋总重(kg)：332.876</span>
              </div>
              <div className="mt-[2px] flex flex-1">
                <RebarGrid />
              </div>
            </div>
          </div>
        </div>
      </div>

      <SettingsDialog />

      {/* Red annotation arrows drawn over the screenshot */}
      <svg viewBox="0 0 1564 975" className="pointer-events-none absolute left-0 top-0 h-[975px] w-[1564px]">
        <path d="M710 325L921 356L923 352L937 362L918 368L920 362L710 326Z" fill="#f44040" />
        <path d="M340 704L444 731L443 726L458 737L440 741L442 736L340 705Z" fill="#f44040" />
      </svg>
    </div>
  );
}
